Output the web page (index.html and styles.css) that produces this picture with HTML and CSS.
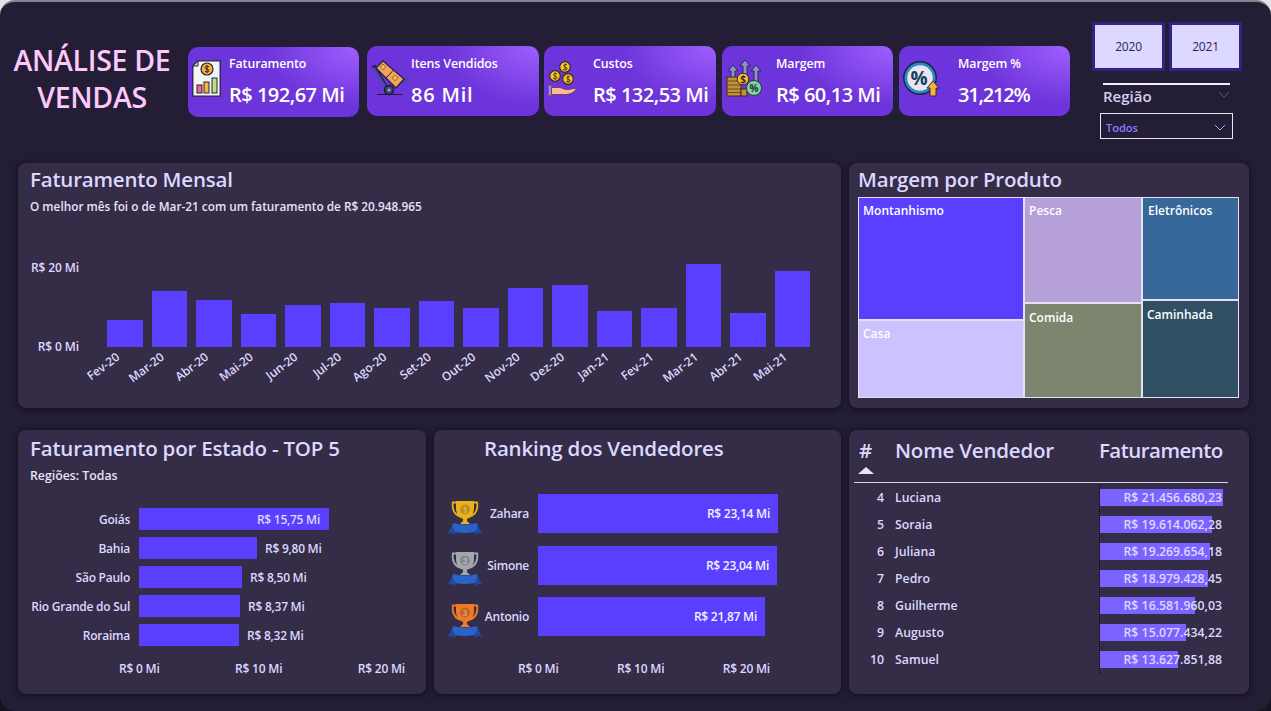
FILE: index.html
```html
<!DOCTYPE html>
<html lang="pt-BR">
<head>
<meta charset="utf-8">
<title>Análise de Vendas</title>
<link rel="stylesheet" href="styles.css">
</head>
<body>
<svg class="defs" width="0" height="0" aria-hidden="true">
  <symbol id="trophy" viewBox="0 0 34 36">
    <path d="M9 2.500H4.800c-.8 7 2 12.500 8 14.500M25 2.500h4.200c.8 7-2 12.500-8 14.500" fill="none" stroke="currentColor" stroke-width="1.800"/>
    <path d="M8 1h18v7c0 6.500-4 11-9 11S8 14.500 8 8z" fill="currentColor"/>
    <circle cx="17" cy="9.500" r="5" fill="#000" fill-opacity=".18"/>
    <path d="M15 18h4v3l3 3H12l3-3z" fill="currentColor"/>
    <path d="M5 23c8 2 16 2 24 0l2 8c-9 2.500-19 2.500-28 0z" fill="#2b62c9"/>
    <path d="M4 26L0 33.500l4-.5 3 2 .5-3zM30 26l4 7.500-4-.5-3 2-.5-3z" fill="#1e4aa3"/>
  </symbol>
</svg>
<main class="app">
  <header class="top">
    <h1 class="brand">ANÁLISE DE VENDAS</h1>
    <section class="kpi kpi-1">
      <svg class="kpi-icon ic-1" viewBox="0 0 29 37"><path d="M6 .8h22.200v35.400H.8V6z" fill="#f4f4f6" stroke="#252040" stroke-width="1.300"/><path d="M6 .8V6H.8z" fill="#c9c9d2" stroke="#252040"/><circle cx="15" cy="9" r="6" fill="#f5b335" stroke="#252040" stroke-width="1.200"/><path d="M17 6.800c-1-1-4-1-4 .8s4 1 4 3-3 1.600-4 .6M15 5v8" fill="none" stroke="#252040"/><rect x="5" y="25" width="5" height="8" fill="#ef6a7f" stroke="#252040"/><rect x="12" y="22" width="5" height="11" fill="#f5b83d" stroke="#252040"/><rect x="20" y="18" width="5" height="15" fill="#b9e07e" stroke="#252040"/></svg>
      <div class="kpi-text"><span class="kpi-label">Faturamento</span><strong class="kpi-value">R$ 192,67 Mi</strong></div>
    </section>
    <section class="kpi kpi-2">
      <svg class="kpi-icon ic-2" viewBox="0 0 38 38"><path d="M1 9l3-1 13 23" fill="none" stroke="#23204a" stroke-width="2"/><path d="M15 31l21-9-2-3" fill="none" stroke="#4b4aa6" stroke-width="3"/><path d="M3 11l12 19" fill="none" stroke="#4b4aa6" stroke-width="2.500"/><path d="M12 3l21 18-8 9L5 10z" fill="#f5a35c" stroke="#23204a" stroke-width="1.300"/><path d="M22.500 12L15 20" stroke="#23204a"/><rect x="10" y="7" width="4" height="4" fill="#f7c948" stroke="#23204a" stroke-width=".5" transform="rotate(42 12 9)"/><rect x="22" y="18" width="4" height="4" fill="#f7c948" stroke="#23204a" stroke-width=".5" transform="rotate(42 24 20)"/><circle cx="18" cy="32" r="4.500" fill="#41436b" stroke="#1d1b36" stroke-width="1.500"/><circle cx="18" cy="32" r="1.500" fill="#a5a7d1"/><path d="M6 36.500h25" stroke="#1d1b36" stroke-width="1.200"/></svg>
      <div class="kpi-text"><span class="kpi-label">Itens Vendidos</span><strong class="kpi-value">86 Mil</strong></div>
    </section>
    <section class="kpi kpi-3">
      <svg class="kpi-icon ic-3" viewBox="0 0 32 36"><g fill="#f7c32e" stroke="#3a2a1a" stroke-width="1.200"><circle cx="17" cy="6" r="5.300"/><circle cx="7" cy="15" r="5.300"/><circle cx="20" cy="18" r="5.300"/></g><g fill="none" stroke="#5a3b12"><path d="M19 4c-2-1.500-4 0-3 1.500s4 .5 3 2.500-3 .8-4 .2M17 2.500v7"/><path d="M9 13c-2-1.500-4 0-3 1.500s4 .5 3 2.500-3 .8-4 .2M7 11.500v7"/><path d="M22 16c-2-1.500-4 0-3 1.500s4 .5 3 2.500-3 .8-4 .2M20 14.500v7"/></g><rect x=".5" y="24.500" width="3" height="10" fill="#4fb3e8" stroke="#b5359a"/><path d="M3.500 26.500h8c3 0 4 2 7 2 4 0 6-1 10-1.500-1 3-5 6.500-11 6.500h-14z" fill="#f7b9a0" stroke="#7d3e4a"/></svg>
      <div class="kpi-text"><span class="kpi-label">Custos</span><strong class="kpi-value">R$ 132,53 Mi</strong></div>
    </section>
    <section class="kpi kpi-4">
      <svg class="kpi-icon ic-4" viewBox="0 0 38 38"><g fill="#9290cb" stroke="#2a2a55"><path d="M7 6l5 6H9v10H5V12H2z"/><path d="M19 1l5 6h-3v14h-4V7h-3z"/><path d="M30 6l5 6h-3v12h-4V12h-3z"/></g><rect x="1" y="18" width="14" height="19" fill="#c0903a" stroke="#3c2c18"/><path d="M1 22h14M1 26h14M1 30h14M1 33.500h14" stroke="#6b4a1e"/><rect x="15" y="30" width="6" height="7" fill="#c0903a" stroke="#3c2c18"/><circle cx="28" cy="29" r="7.500" fill="#7fd69b" stroke="#2a3a40"/><text class="ic-pct" x="28" y="33" text-anchor="middle">%</text><circle cx="17" cy="20" r="5.800" fill="#f5b83d" stroke="#3c2c18"/><text class="ic-usd" x="17" y="23.500" text-anchor="middle">$</text></svg>
      <div class="kpi-text"><span class="kpi-label">Margem</span><strong class="kpi-value">R$ 60,13 Mi</strong></div>
    </section>
    <section class="kpi kpi-5">
      <svg class="kpi-icon ic-5" viewBox="0 0 38 38"><circle cx="17" cy="19" r="17" fill="#14283a"/><circle cx="17" cy="19" r="15.500" fill="#2f86c4"/><circle cx="17" cy="19" r="12.800" fill="#e6e6ec"/><text class="ic-big" x="16" y="26" text-anchor="middle">%</text><path d="M30 22l6 7h-3v8h-6v-8h-3z" fill="#f7b23e" stroke="#2a2a40"/></svg>
      <div class="kpi-text"><span class="kpi-label">Margem %</span><strong class="kpi-value">31,212%</strong></div>
    </section>
    <aside class="slicers">
      <div class="years"><button class="year">2020</button><button class="year">2021</button></div>
      <div class="region">
        <div class="region-head"><span>Região</span><svg class="chev chev-dim" viewBox="0 0 12 7"><path d="M1 1l5 5 5-5"/></svg></div>
        <div class="dropdown"><span>Todos</span><svg class="chev" viewBox="0 0 12 7"><path d="M1 1l5 5 5-5"/></svg></div>
      </div>
    </aside>
  </header>

  <div class="row row-1">
    <section class="panel monthly">
      <h2 class="panel-title">Faturamento Mensal</h2>
      <p class="panel-sub">O melhor mês foi o de Mar-21 com um faturamento de R$ 20.948.965</p>
      <div class="col-chart">
        <div class="y-axis"><span>R$ 20 Mi</span><span>R$ 0 Mi</span></div>
        <div class="plot">
          <div class="cols">
            <i style="height:27px"></i><i style="height:56px"></i><i style="height:47px"></i><i style="height:33px"></i><i style="height:42px"></i><i style="height:44px"></i><i style="height:39px"></i><i style="height:46px"></i><i style="height:39px"></i><i style="height:59px"></i><i style="height:62px"></i><i style="height:36px"></i><i style="height:39px"></i><i style="height:83px"></i><i style="height:34px"></i><i style="height:76px"></i>
          </div>
          <div class="x-labels">
            <span><b>Fev-20</b></span><span><b>Mar-20</b></span><span><b>Abr-20</b></span><span><b>Mai-20</b></span><span><b>Jun-20</b></span><span><b>Jul-20</b></span><span><b>Ago-20</b></span><span><b>Set-20</b></span><span><b>Out-20</b></span><span><b>Nov-20</b></span><span><b>Dez-20</b></span><span><b>Jan-21</b></span><span><b>Fev-21</b></span><span><b>Mar-21</b></span><span><b>Abr-21</b></span><span><b>Mai-21</b></span>
          </div>
        </div>
      </div>
    </section>
    <section class="panel product">
      <h2 class="panel-title">Margem por Produto</h2>
      <div class="treemap">
        <div class="tm-col tm-a"><div class="tm t1" style="height:123px">Montanhismo</div><div class="tm t2" style="height:78px">Casa</div></div>
        <div class="tm-col tm-b"><div class="tm t3" style="height:106px">Pesca</div><div class="tm t4" style="height:95px">Comida</div></div>
        <div class="tm-col tm-c"><div class="tm t5" style="height:103px">Eletrônicos</div><div class="tm t6" style="height:98px">Caminhada</div></div>
      </div>
    </section>
  </div>

  <div class="row row-2">
    <section class="panel state">
      <h2 class="panel-title">Faturamento por Estado - TOP 5</h2>
      <p class="panel-sub state-sub">Regiões: Todas</p>
      <div class="hbars">
        <div class="hrow"><span class="hname">Goiás</span><div class="hbar inside" style="width:190px"><span>R$ 15,75 Mi</span></div></div>
        <div class="hrow"><span class="hname">Bahia</span><div class="hbar" style="width:118px"></div><span class="hval">R$ 9,80 Mi</span></div>
        <div class="hrow"><span class="hname">São Paulo</span><div class="hbar" style="width:103px"></div><span class="hval">R$ 8,50 Mi</span></div>
        <div class="hrow"><span class="hname">Rio Grande do Sul</span><div class="hbar" style="width:101px"></div><span class="hval">R$ 8,37 Mi</span></div>
        <div class="hrow"><span class="hname">Roraima</span><div class="hbar" style="width:100px"></div><span class="hval">R$ 8,32 Mi</span></div>
      </div>
      <div class="x-axis state-axis"><span>R$ 0 Mi</span><span>R$ 10 Mi</span><span>R$ 20 Mi</span></div>
    </section>
    <section class="panel ranking">
      <h2 class="panel-title ranking-title">Ranking dos Vendedores</h2>
      <div class="rbars">
        <div class="rrow"><span class="trophy gold"><svg viewBox="0 0 34 36"><use href="#trophy"/><text x="17" y="12.500" text-anchor="middle">1</text></svg></span><span class="rname">Zahara</span><div class="rbar" style="width:240px"><span>R$ 23,14 Mi</span></div></div>
        <div class="rrow"><span class="trophy silver"><svg viewBox="0 0 34 36"><use href="#trophy"/><text x="17" y="12.500" text-anchor="middle">2</text></svg></span><span class="rname">Simone</span><div class="rbar" style="width:239px"><span>R$ 23,04 Mi</span></div></div>
        <div class="rrow"><span class="trophy bronze"><svg viewBox="0 0 34 36"><use href="#trophy"/><text x="17" y="12.500" text-anchor="middle">3</text></svg></span><span class="rname">Antonio</span><div class="rbar" style="width:227px"><span>R$ 21,87 Mi</span></div></div>
      </div>
      <div class="x-axis ranking-axis"><span>R$ 0 Mi</span><span>R$ 10 Mi</span><span>R$ 20 Mi</span></div>
    </section>
    <section class="panel sellers">
      <div class="thead">
        <div class="th-rank">#<i class="sort"></i></div>
        <div class="th-name">Nome Vendedor</div>
        <div class="th-fat">Faturamento</div>
      </div>
      <div class="tr"><span class="rank">4</span><span class="name">Luciana</span><span class="fat"><i style="width:123px"></i><b>R$ 21.456.680,23</b></span></div>
      <div class="tr"><span class="rank">5</span><span class="name">Soraia</span><span class="fat"><i style="width:112px"></i><b>R$ 19.614.062,28</b></span></div>
      <div class="tr"><span class="rank">6</span><span class="name">Juliana</span><span class="fat"><i style="width:110px"></i><b>R$ 19.269.654,18</b></span></div>
      <div class="tr"><span class="rank">7</span><span class="name">Pedro</span><span class="fat"><i style="width:108px"></i><b>R$ 18.979.428,45</b></span></div>
      <div class="tr"><span class="rank">8</span><span class="name">Guilherme</span><span class="fat"><i style="width:95px"></i><b>R$ 16.581.960,03</b></span></div>
      <div class="tr"><span class="rank">9</span><span class="name">Augusto</span><span class="fat"><i style="width:86px"></i><b>R$ 15.077.434,22</b></span></div>
      <div class="tr"><span class="rank">10</span><span class="name">Samuel</span><span class="fat"><i style="width:78px"></i><b>R$ 13.627.851,88</b></span></div>
    </section>
  </div>
</main>
</body>
</html>
```
FILE: styles.css
```css
* { box-sizing: border-box; }
html, body { margin: 0; height: 100%; overflow: hidden; }
body {
  background: linear-gradient(#e4e4e6 0 30px, #16121f 30px);
  font-family: "Open Sans", "Noto Sans", sans-serif;
  color: #e4deff;
}
.defs { position: absolute; }
.app {
  width: 1271px;
  height: 711px;
  background: #231e35;
  border-top: 2px solid #85838d;
  border-radius: 15px;
  overflow: hidden;
}
h1, h2, p { margin: 0; }

/* header */
.top { display: flex; height: 161px; padding-left: 8px; }
.brand {
  width: 168px;
  margin: 40px 12px 0 0;
  font-size: 28.500px;
  line-height: 37px;
  font-weight: 600;
  letter-spacing: -0.3px;
  text-align: center;
  color: #fdc8fb;
  height: 74px;
}
.kpi {
  display: flex;
  align-items: flex-start;
  width: 172px;
  height: 70px;
  margin-top: 44px;
  margin-right: 6px;
  border-radius: 10px;
  background:
    radial-gradient(ellipse 95px 60px at 100% 0, #a05fff 0, rgba(160,95,255,0) 100%),
    #6c34da;
}
.kpi-1 { width: 171px; margin-top: 45px; margin-right: 8px; }
.kpi-2 { margin-right: 5px; }
.kpi-4, .kpi-5 { width: 171px; }
.kpi-icon { flex: none; display: block; }
.ic-1 { width: 29px; height: 37px; margin: 13px 8px 0 4px; }
.ic-2 { width: 38px; height: 38px; margin: 12px 2px 0 4px; }
.ic-3 { width: 32px; height: 36px; margin: 15px 13px 0 4px; }
.ic-4 { width: 38px; height: 38px; margin: 13px 12px 0 4px; }
.ic-5 { width: 38px; height: 38px; margin: 13px 17px 0 4px; }
.ic-pct { font: 700 10px "Open Sans", sans-serif; fill: #23304a; }
.ic-usd { font: 700 10px "Open Sans", sans-serif; fill: #3c2c18; }
.ic-big { font: 700 19px "Open Sans", sans-serif; fill: #17405f; }
.kpi-text { display: flex; flex-direction: column; color: #fff; white-space: nowrap; }
.kpi-label { margin-top: 10px; font-size: 12.400px; line-height: 16px; font-weight: 600; letter-spacing: -0.1px; }
.kpi-1 .kpi-label { margin-top: 9px; }
.kpi-value { margin-top: 10px; font-size: 20px; line-height: 26px; font-weight: 600; letter-spacing: -0.5px; }
.kpi-2 .kpi-value { letter-spacing: .8px; }
.kpi-5 .kpi-value { letter-spacing: -1.200px; }

.slicers { width: 150px; margin-left: 16px; padding-top: 20px; }
.years { display: flex; gap: 4px; }
.year {
  width: 73px;
  height: 49px;
  padding: 0;
  border: 3px solid #2f2580;
  background: #dcd8ff;
  color: #2a2460;
  font: 400 12px "Open Sans", sans-serif;
  letter-spacing: -0.2px;
}
.region { margin-top: 12px; margin-left: 8px; width: 133px; }
.region-head {
  display: flex;
  justify-content: space-between;
  align-items: flex-start;
  margin: 0 3px;
  width: 127px;
  border-top: 2px solid #efeaff;
  height: 30px;
  padding: 1px 0 0;
  font-size: 15px;
  line-height: 20px;
  font-weight: 600;
  color: #d5cfef;
}
.chev { width: 12px; height: 7px; fill: none; stroke: #a99fff; stroke-width: 1; flex: none; }
.chev-dim { stroke: #5e5870; margin: 5px 0 0; }
.dropdown {
  display: flex;
  justify-content: space-between;
  align-items: center;
  height: 26px;
  padding: 2px 6px 0 5px;
  border: 1px solid #e8e4f6;
  font-size: 11px;
  font-weight: 600;
  color: #8d7dff;
}

/* layout */
.row { display: flex; gap: 8px; margin: 0 22px 0 18px; }
.row-1 { height: 245px; }
.row-2 { height: 264px; margin-top: 22px; }
.panel {
  background: #352c47;
  border-radius: 8px;
  box-shadow: 0 1px 6px rgba(10, 6, 20, .8);
  min-width: 0;
}
.panel-title { font-size: 20.500px; line-height: 24px; font-weight: 600; color: #dcd8ff; white-space: nowrap; letter-spacing: -0.2px; }
.panel-sub { font-size: 11.800px; line-height: 16px; font-weight: 600; color: #e6e2fa; white-space: nowrap; }

/* monthly */
.monthly { width: 823px; padding: 4px 12px 0; }
.monthly .panel-sub { margin-top: 7px; }
.col-chart { display: flex; margin-top: 43px; }
.y-axis {
  width: 49px;
  margin-right: 28px;
  height: 98px;
  padding-top: 3px;
  display: flex;
  flex-direction: column;
  justify-content: space-between;
  align-items: flex-end;
  font-size: 12px;
  line-height: 16px;
  font-weight: 600;
  letter-spacing: -0.1px;
  color: #dcd8ff;
  white-space: nowrap;
}
.plot { width: 710px; }
.cols { display: flex; align-items: flex-end; gap: 9px; height: 90px; }
.cols i { width: 35.500px; background: #5a3fff; flex: none; }
.x-labels { display: flex; gap: 9px; padding-top: 3px; height: 36px; }
.x-labels span { width: 35.500px; flex: none; display: flex; justify-content: flex-end; padding-right: 29px; }
.x-labels b {
  flex: none;
  font-size: 12px;
  line-height: 14px;
  font-weight: 600;
  letter-spacing: -0.1px;
  color: #dcd8ff;
  white-space: nowrap;
  transform-origin: right top;
  transform: rotate(-37deg);
}

/* treemap */
.product { width: 400px; padding: 4px 10px 0 9px; }
.treemap { display: flex; height: 201px; margin-top: 6px; }
.tm-col { display: flex; flex-direction: column; }
.tm-a { width: 166px; }
.tm-b { width: 118px; }
.tm-c { width: 97px; }
.tm {
  flex: none;
  padding: 5px 4px;
  border: 1px solid #e4e2f2;
  font-size: 12px;
  line-height: 16px;
  font-weight: 600;
  color: #fff;
}
.t1 { background: #5a3fff; }
.t2 { background: #cbc2ff; }
.t3 { background: #b5a0d8; }
.t4 { background: #7e856e; padding-top: 6px; }
.t5 { background: #366899; padding-left: 5px; }
.t6 { background: #304f63; padding: 6px 4px 0 4px; }

/* state */
.state { width: 408px; padding: 6px 0 0 12px; }
.state-sub { margin-top: 8px; font-size: 12.300px; }
.hbars { display: flex; flex-direction: column; gap: 7px; margin-top: 24px; }
.hrow { display: flex; align-items: center; height: 22px; font-size: 12px; letter-spacing: -0.25px; font-weight: 600; white-space: nowrap; color: #dcd8ff; }
.hname { width: 100px; margin-right: 9px; text-align: right; flex: none; display: flex; justify-content: flex-end; }
.hbar { height: 22px; background: #5a3fff; flex: none; }
.hbar.inside { display: flex; align-items: center; justify-content: flex-end; padding-right: 9px; }
.hval { margin-left: 8px; }
.x-axis { display: flex; justify-content: space-between; font-size: 12px; letter-spacing: -0.2px; line-height: 16px; font-weight: 600; color: #dcd8ff; white-space: nowrap; }
.state-axis { width: 286px; margin: 15px 0 0 89px; }

/* ranking */
.ranking { width: 407px; padding-top: 6px; }
.ranking-title { padding-left: 50px; }
.rbars { display: flex; flex-direction: column; gap: 12.500px; margin-top: 34px; padding-left: 14px; }
.rrow { display: flex; align-items: center; height: 39px; font-size: 12px; letter-spacing: -0.25px; font-weight: 600; color: #dcd8ff; white-space: nowrap; }
.trophy { width: 34px; height: 36px; flex: none; display: block; margin-top: 8px; }
.trophy svg { display: block; width: 34px; height: 36px; }
.trophy text { font: 700 8px "Open Sans", sans-serif; fill: rgba(255,255,255,.4); }
.gold { color: #e9b21d; }
.silver { color: #a3a6ad; }
.bronze { color: #ee7a2a; }
.rname { width: 47px; margin-right: 9px; display: flex; justify-content: flex-end; flex: none; }
.rbar { height: 39px; background: #5a3fff; display: flex; align-items: center; justify-content: flex-end; padding-right: 8px; color: #f4f1ff; flex: none; }
.ranking-axis { width: 252px; margin: 25px 0 0 84px; }

/* table */
.sellers { width: 400px; padding-left: 5px; }
.thead { display: flex; width: 374px; height: 53px; padding-top: 7px; border-bottom: 1.500px solid #d8d4e8; font-size: 20.500px; line-height: 26px; font-weight: 600; letter-spacing: -0.2px; color: #dcd8ff; }
.th-rank { width: 41px; padding-left: 5px; }
.sort { display: block; width: 0; height: 0; margin: 4px 0 0 -1px; border: 8px solid transparent; border-top: 0; border-bottom: 7px solid #e8e4f6; }
.th-name { width: 204px; white-space: nowrap; }
.th-fat { white-space: nowrap; letter-spacing: -0.55px; }
.tr { display: flex; align-items: center; width: 374px; height: 27px; font-size: 12.300px; font-weight: 600; color: #dcd8ff; white-space: nowrap; }
.tr:first-of-type { margin-top: 1px; }
.thead + .tr { margin-top: 1px; }
.rank { width: 30px; text-align: right; margin-right: 11px; flex: none; }
.name { width: 204px; flex: none; }
.fat { position: relative; display: flex; align-items: center; justify-content: flex-end; width: 124px; height: 27px; padding-right: 1px; border-left: 1px dotted #0a0714; flex: none; }
.fat i { position: absolute; left: 0; top: 5px; height: 17px; background: #7b63ff; }
.fat b { position: relative; font-weight: 600; }
```
